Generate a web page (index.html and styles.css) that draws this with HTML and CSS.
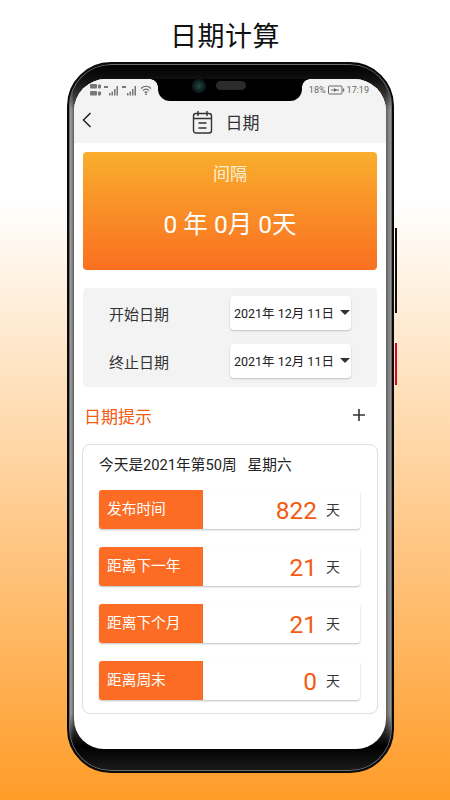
FILE: index.html
```html
<!DOCTYPE html>
<html>
<head>
	<meta charset="UTF-8">
	<title>日期计算</title>
	<link rel="stylesheet" href="styles.css">
</head>
<body>
	<h1 class="pagetitle">日期计算</h1>
	<div class="phone">
		<span class="sidekey"></span>
		<span class="sidekey red"></span>
		<div class="screen">
			<div class="notch">
				<span class="camera"></span>
				<span class="speaker"></span>
			</div>
			<div class="top">
				<div class="status">
					<div class="status-left">
						<svg width="48" height="14" viewBox="0 0 48 14">
							<g fill="#777">
								<rect x="0" y="1" width="7" height="4.5" rx="1"/><rect x="0" y="8" width="7" height="4.5" rx="1"/>
								<rect x="8" y="1.5" width="3" height="4" rx="1"/><rect x="8" y="8.5" width="3" height="4" rx="1"/>
								<rect x="14" y="3" width="4" height="2"/>
								<rect x="19" y="10" width="1.5" height="2.5"/><rect x="21.5" y="8.5" width="1.5" height="4"/><rect x="24" y="6" width="1.5" height="6.5"/><rect x="26.5" y="3" width="1.5" height="9.5"/>
								<rect x="32" y="3" width="4" height="2"/>
								<rect x="37" y="10" width="1.5" height="2.5"/><rect x="39.5" y="8.5" width="1.5" height="4"/><rect x="42" y="6" width="1.5" height="6.5"/><rect x="44.5" y="3" width="1.5" height="9.5"/>
							</g>
						</svg>
						<svg width="12" height="12" viewBox="0 0 12 12" fill="none" stroke="#666" stroke-width="1.1">
							<path d="M1 4.5C4 1.5 8 1.5 11 4.5M2.8 6.6C4.8 4.8 7.2 4.8 9.2 6.6M4.5 8.5C5.4 7.8 6.6 7.8 7.5 8.5"/>
							<path d="M5.2 10.3h1.6" stroke-width="1.4"/>
						</svg>
					</div>
					<div class="status-right">
						<span>18%</span>
						<svg width="17" height="10" viewBox="0 0 17 10" fill="none" stroke="#666">
							<rect x="0.5" y="1" width="13.5" height="8" rx="1"/>
							<path d="M3 5h8" stroke-width="1"/>
							<path d="M6 3l3 2-3 2z" fill="#666" stroke="none"/>
							<rect x="15" y="3.5" width="1.2" height="3" fill="#666" stroke="none"/>
						</svg>
						<span>17:19</span>
					</div>
				</div>
				<div class="titlebar">
					<svg class="back" width="10" height="16" viewBox="0 0 10 16" fill="none" stroke="#222" stroke-width="1.5">
						<path d="M8.5 1L1.5 8l7 7"/>
					</svg>
					<svg width="21" height="24" viewBox="0 0 20 24" fill="none" stroke="#333" stroke-width="1.4">
						<rect x="1" y="3.5" width="18" height="19.5" rx="2.5"/>
						<path d="M1 8.5h18M5.5 1v5M14.5 1v5M6 13h8M6 18h8"/>
					</svg>
					<span class="titletext">日期</span>
				</div>
			</div>

			<div class="content">
				<div class="interval">
					<div class="interval-label">间隔</div>
					<div class="interval-value">0 年 0月 0天</div>
				</div>

				<div class="dates">
					<div class="dateline">
						<span class="datename">开始日期</span>
						<div class="datepick"><span>2021年 12月 11日</span><i class="arrow"></i></div>
					</div>
					<div class="dateline">
						<span class="datename">终止日期</span>
						<div class="datepick"><span>2021年 12月 11日</span><i class="arrow"></i></div>
					</div>
				</div>

				<div class="tiphead">
					<span>日期提示</span>
					<svg width="14" height="14" viewBox="0 0 14 14" stroke="#333" stroke-width="1.6">
						<path d="M7 1v12M1 7h12"/>
					</svg>
				</div>

				<div class="tipcard">
					<div class="today">今天是2021年第50周&nbsp;&nbsp;&nbsp;星期六</div>
					<div class="tip">
						<div class="tipname">发布时间</div>
						<div class="tipnum">822</div>
						<div class="tipunit">天</div>
					</div>
					<div class="tip">
						<div class="tipname">距离下一年</div>
						<div class="tipnum">21</div>
						<div class="tipunit">天</div>
					</div>
					<div class="tip">
						<div class="tipname">距离下个月</div>
						<div class="tipnum">21</div>
						<div class="tipunit">天</div>
					</div>
					<div class="tip">
						<div class="tipname">距离周末</div>
						<div class="tipnum">0</div>
						<div class="tipunit">天</div>
					</div>
				</div>
			</div>
		</div>
	</div>
</body>
</html>
```

FILE: styles.css
```css
*{
	padding: 0;
	margin: 0;
	box-sizing: border-box;
}
html,body{
	height: 800px;
	overflow: hidden;
}
body{
	width: 450px;
	font-family: Roboto, "Noto Sans CJK SC", sans-serif;
	background: linear-gradient(to bottom, #fff 0, #fff 200px, #ff9c28 800px);
}
.pagetitle{
	height: 62px;
	padding-top: 18px;
	text-align: center;
	font-size: 27px;
	line-height: 38px;
	font-weight: 400;
	letter-spacing: .5px;
	color: #111;
}
.phone{
	position: relative;
	width: 327px;
	height: 711px;
	margin-left: 67px;
	padding: 15px 6px 22px 5px;
	border: 2.5px solid #0a0a0a;
	border-radius: 44px;
	background:
		linear-gradient(to bottom, #000 0, #111 16px, rgba(0,0,0,0) 46px, rgba(0,0,0,0) 650px, #000 682px, #1a1a1a 706px),
		linear-gradient(to right, #a8a8a8 0, #8a8a8a 3px, #555 5px, #555 316px, #9a9a9a 322px);
	box-shadow: inset 0 0 0 1px #6a6a6a;
}
.sidekey{
	position: absolute;
	right: -4.5px;
	top: 164px;
	width: 2px;
	height: 85px;
	background: #111;
}
.sidekey.red{
	top: 279px;
	height: 42px;
	background: #c8102e;
}
.screen{
	position: relative;
	height: 100%;
	overflow: hidden;
	border-radius: 32px 32px 30px 30px;
	background: #fff;
}
.notch{
	position: absolute;
	left: 84px;
	top: 0;
	width: 144px;
	height: 22px;
	display: flex;
	align-items: flex-start;
	gap: 10px;
	padding-left: 34px;
	background: #000;
	border-radius: 0 0 12px 12px;
}
.notch::before,.notch::after{
	content: "";
	position: absolute;
	top: 0;
	width: 8px;
	height: 8px;
}
.notch::before{
	left: -8px;
	background: radial-gradient(circle at 0 100%, rgba(0,0,0,0) 7.5px, #000 8px);
}
.notch::after{
	right: -8px;
	background: radial-gradient(circle at 100% 100%, rgba(0,0,0,0) 7.5px, #000 8px);
}
.camera{
	width: 14px;
	height: 14px;
	border-radius: 50%;
	background: radial-gradient(circle, #1d4a45 0, #0d1a1a 60%, #222 100%);
}
.speaker{
	width: 30px;
	height: 9px;
	margin-top: 2px;
	border-radius: 5px;
	background: #2b2b2b;
}
.top{
	height: 64px;
	background: #f3f3f3;
}
.status{
	display: flex;
	justify-content: space-between;
	align-items: center;
	height: 21px;
	padding: 0 17px 0 16px;
	font-size: 9px;
	color: #666;
}
.status-left,.status-right{
	display: flex;
	align-items: center;
	gap: 2px;
}
.titlebar{
	position: relative;
	display: flex;
	justify-content: center;
	align-items: center;
	gap: 13px;
	height: 43px;
	padding-right: 9px;
}
.back{
	position: absolute;
	left: 8px;
	top: 12px;
}
.titletext{
	font-size: 17px;
	color: #333;
}
.content{
	padding: 9px 9px 0 9px;
}
.interval{
	height: 118px;
	padding-top: 10px;
	text-align: center;
	color: #fff;
	border-radius: 4px;
	background: linear-gradient(to bottom, #f9ae2e, #fa6f20);
}
.interval-label{
	font-size: 17px;
	line-height: 24px;
	color: #fdf0d8;
}
.interval-value{
	margin-top: 21px;
	font-size: 24.5px;
	line-height: 36px;
}
.dates{
	display: flex;
	flex-direction: column;
	gap: 14px;
	height: 99px;
	margin-top: 18px;
	padding: 8px 26px 0 26px;
	background: #f3f3f3;
	border-radius: 4px;
}
.dateline{
	display: flex;
	justify-content: space-between;
	align-items: center;
}
.datename{
	font-size: 15px;
	color: #333;
}
.datepick{
	display: flex;
	justify-content: space-between;
	align-items: center;
	width: 121px;
	height: 34px;
	padding: 0 1px 1px 4px;
	font-size: 12.5px;
	color: #222;
	background: #fff;
	border-radius: 4px;
	box-shadow: 0 1px 2px rgba(0,0,0,.2);
}
.arrow{
	width: 0;
	height: 0;
	border-left: 5.5px solid transparent;
	border-right: 5.5px solid transparent;
	border-top: 5.5px solid #333;
	margin-bottom: 1px;
}
.tiphead{
	display: flex;
	justify-content: space-between;
	align-items: center;
	height: 57px;
	padding: 0 11px 1px 1px;
	font-size: 17px;
	color: #f55a12;
}
.tipcard{
	height: 270px;
	margin: 0 -1px;
	padding: 8px 17px 0 16px;
	border: 1px solid #dedede;
	border-radius: 8px;
	background: #fff;
}
.today{
	height: 37px;
	font-size: 14.7px;
	line-height: 24px;
	color: #222;
}
.tip{
	display: flex;
	align-items: center;
	height: 39px;
	margin-bottom: 18px;
	background: #fff;
	border-radius: 3px;
	box-shadow: 0 1px 2px rgba(0,0,0,.25);
}
.tipname{
	width: 104px;
	height: 100%;
	padding-left: 8px;
	font-size: 14.7px;
	line-height: 39px;
	color: #fff;
	background: #fc6c24;
	border-radius: 3px 0 0 3px;
}
.tipnum{
	flex: 1;
	padding-top: 1px;
	text-align: right;
	font-size: 24.5px;
	color: #f55a12;
}
.tipunit{
	width: 43px;
	padding: 0 20px 2px 0;
	text-align: right;
	font-size: 14px;
	color: #333;
}
```
